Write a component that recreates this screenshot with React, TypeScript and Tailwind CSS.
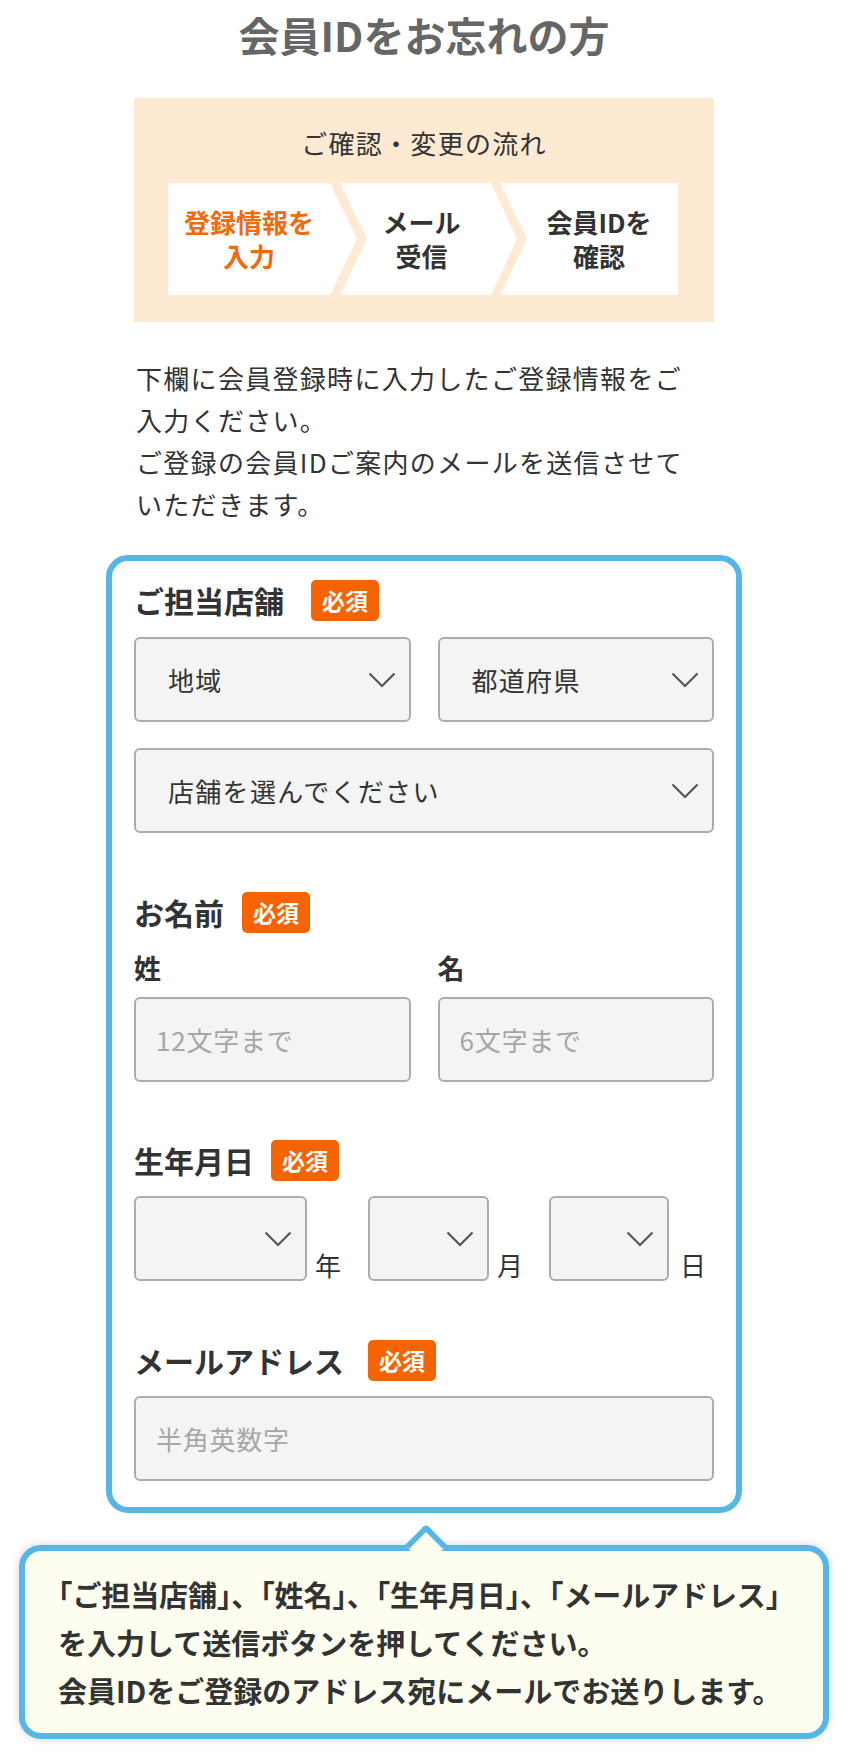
import React from "react";

const Chevron: React.FC = () => (
  <svg
    width="28"
    height="16"
    viewBox="0 0 28 16"
    className="pointer-events-none absolute right-[15px] top-1/2 -translate-y-1/2"
  >
    <path d="M1.5 1.5 L14 14 L26.5 1.5" fill="none" stroke="#555" strokeWidth="2.2" />
  </svg>
);

const Badge: React.FC<{ gap?: string }> = ({ gap }) => (
  <span
    className={`${gap ?? "ml-5"} inline-flex h-[41px] items-center rounded-[5px] bg-[#f56400] px-[11px] text-[23px] font-bold leading-none text-white`}
  >
    必須
  </span>
);

const Label: React.FC<{ text: string; gap?: string }> = ({ text, gap }) => (
  <div className="flex h-[42px] items-center">
    <span className="text-[30px] font-bold leading-[42px] text-[#333]">{text}</span>
    <Badge gap={gap} />
  </div>
);

const SelectBox: React.FC<{ label?: string; className?: string }> = ({ label, className }) => (
  <div className={`relative h-[85px] ${className ?? ""}`}>
    <select
      className="h-full w-full appearance-none rounded-[6px] border-2 border-[#acacac] bg-[#f4f4f4] pl-[32px] text-[26px] tracking-[0.05em] text-[#333] outline-none"
      defaultValue=""
    >
      <option value="">{label ?? ""}</option>
    </select>
    <Chevron />
  </div>
);

const TextBox: React.FC<{ placeholder: string }> = ({ placeholder }) => (
  <input
    type="text"
    placeholder={placeholder}
    className="h-[85px] w-full rounded-[6px] border-2 border-[#acacac] bg-[#f4f4f4] pl-[20px] text-[26px] tracking-[0.03em] text-[#333] outline-none placeholder:text-[#a6a6a6]"
  />
);

const steps = [
  { lines: ["登録情報を", "入力"], active: true },
  { lines: ["メール", "受信"], active: false },
  { lines: ["会員IDを", "確認"], active: false },
];

const App: React.FC = () => {
  return (
    <div className="min-h-[1760px] bg-white pb-[20px] font-['Noto_Sans_CJK_JP','Noto_Sans',sans-serif] text-[#333]">
      <h1 className="pt-[10px] text-center text-[41px] font-bold leading-[48px] text-[#666]">
        会員IDをお忘れの方
      </h1>

      {/* flow */}
      <div className="mx-auto mt-[40px] h-[224px] w-[580px] bg-[#feead2] px-[34px] pt-[25px]">
        <p className="text-center text-[26px] leading-[40px] tracking-[0.05em] text-[#333]">
          ご確認・変更の流れ
        </p>
        <div className="mt-[20px] flex h-[112px]">
          <div className="flex w-[189px] shrink-0 flex-col items-center justify-center bg-white pr-[27px] [clip-path:polygon(0_0,162px_0,189px_50%,162px_100%,0_100%)]">
            {steps[0].lines.map((l) => (
              <span key={l} className="text-[26px] font-bold leading-[34px] text-[#f26a0a]">
                {l}
              </span>
            ))}
          </div>
          <div className="-ml-[17px] flex w-[177px] shrink-0 flex-col items-center justify-center bg-white pl-[15px] pr-[29px] [clip-path:polygon(0_0,151px_0,177px_50%,151px_100%,0_100%,27px_50%)]">
            {steps[1].lines.map((l) => (
              <span key={l} className="text-[26px] font-bold leading-[34px] text-[#333]">
                {l}
              </span>
            ))}
          </div>
          <div className="-ml-[17px] flex w-[178px] shrink-0 flex-col items-center justify-center bg-white pl-[20px] [clip-path:polygon(0_0,100%_0,100%_100%,0_100%,27px_50%)]">
            {steps[2].lines.map((l) => (
              <span key={l} className="text-[26px] font-bold leading-[34px] text-[#333]">
                {l}
              </span>
            ))}
          </div>
        </div>
      </div>

      <p className="mx-auto mt-[35px] w-[580px] pl-[2px] text-[26px] leading-[42px] tracking-[0.05em] text-[#333]">
        下欄に会員登録時に入力したご登録情報をご
        <br />
        入力ください。
        <br />
        ご登録の会員IDご案内のメールを送信させて
        <br />
        いただきます。
      </p>

      {/* form card */}
      <div className="mx-auto mt-[30px] w-[636px] rounded-[22px] border-[6px] border-[#55b6e7] bg-white px-[22px] pb-[26px] pt-[18px]">
        <Label text="ご担当店舗" gap="ml-[27px]" />
        <div className="mt-[16px] grid grid-cols-2 gap-[27px]">
          <SelectBox label="地域" />
          <SelectBox label="都道府県" />
        </div>
        <SelectBox label="店舗を選んでください" className="mt-[26px]" />

        <div className="mt-[58px]">
          <Label text="お名前" gap="ml-[18px]" />
          <div className="mt-[17px] grid grid-cols-2 gap-[27px]">
            <div>
              <div className="text-[27px] font-bold leading-[36px]">姓</div>
              <div className="mt-[11px]">
                <TextBox placeholder="12文字まで" />
              </div>
            </div>
            <div>
              <div className="text-[27px] font-bold leading-[36px]">名</div>
              <div className="mt-[11px]">
                <TextBox placeholder="6文字まで" />
              </div>
            </div>
          </div>
        </div>

        <div className="mt-[57px]">
          <Label text="生年月日" gap="ml-[17px]" />
          <div className="mt-[15px] flex items-end">
            <SelectBox className="w-[173px] shrink-0" />
            <span className="ml-[8px] text-[26px] leading-[32px]">年</span>
            <SelectBox className="ml-[27px] w-[121px] shrink-0" />
            <span className="ml-[8px] text-[26px] leading-[32px]">月</span>
            <SelectBox className="ml-[26px] w-[120px] shrink-0" />
            <span className="ml-[11px] text-[26px] leading-[32px]">日</span>
          </div>
        </div>

        <div className="mt-[58px]">
          <Label text="メールアドレス" gap="ml-[24px]" />
          <div className="mt-[15px]">
            <TextBox placeholder="半角英数字" />
          </div>
        </div>
      </div>

      {/* balloon */}
      <div className="relative mx-auto mt-[32px] w-[810px] rounded-[22px] border-[6px] border-[#55b6e7] bg-[#fefef0] px-[33px] pb-[19px] pt-[19px] shadow-[0_0_8px_rgba(0,0,0,0.18)]">
        <span className="absolute left-[386px] top-[-21px] h-[30px] w-[30px] rotate-45 rounded-tl-[5px] border-l-[6px] border-t-[6px] border-[#55b6e7] bg-[#fefef0]" />
        <p className="relative text-[29px] font-bold leading-[48px] text-[#333] [text-spacing-trim:trim-start]">
          <span className="whitespace-nowrap tracking-[-0.1px]">
            「ご担当店舗」、「姓名」、「生年月日」、「メールアドレス」
          </span>
          <br />
          を入力して送信ボタンを押してください。
          <br />
          会員IDをご登録のアドレス宛にメールでお送りします。
        </p>
      </div>
    </div>
  );
};

export default App;
